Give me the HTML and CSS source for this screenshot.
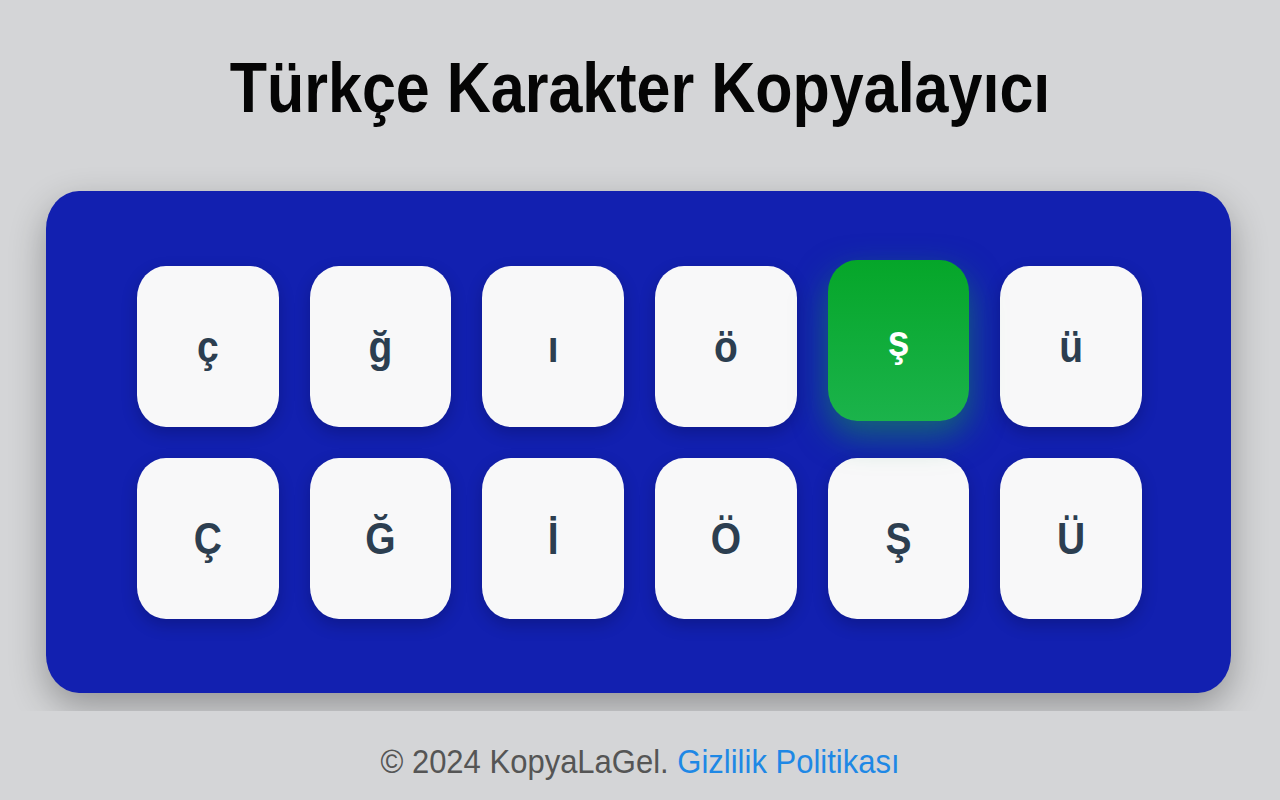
FILE: index.html
```html
<!DOCTYPE html>
<html lang="tr">
<head>
<meta charset="utf-8">
<title>Türkçe Karakter Kopyalayıcı</title>
<link rel="stylesheet" href="styles.css">
</head>
<body>
<main class="page">
  <h1 class="title"><span class="title-text">Türkçe Karakter Kopyalayıcı</span></h1>
  <section class="board">
    <div class="keys">
      <button class="key"><span class="glyph">ç</span></button>
      <button class="key"><span class="glyph">ğ</span></button>
      <button class="key"><span class="glyph">ı</span></button>
      <button class="key"><span class="glyph">ö</span></button>
      <button class="key key-active"><span class="glyph">ş</span></button>
      <button class="key"><span class="glyph">ü</span></button>
      <button class="key"><span class="glyph">Ç</span></button>
      <button class="key"><span class="glyph">Ğ</span></button>
      <button class="key"><span class="glyph">İ</span></button>
      <button class="key"><span class="glyph">Ö</span></button>
      <button class="key"><span class="glyph">Ş</span></button>
      <button class="key"><span class="glyph">Ü</span></button>
    </div>
  </section>
</main>
<footer class="footer">
  <p class="footer-text">© 2024 KopyaLaGel. <a class="footer-link" href="#">Gizlilik Politikası</a></p>
</footer>
</body>
</html>
```

FILE: styles.css
```css
html, body {
  margin: 0;
  padding: 0;
}

body {
  background: #d4d5d7;
  font-family: "Liberation Sans", Arial, sans-serif;
  height: 800px;
  overflow: hidden;
}

.page {
  display: flex;
  flex-direction: column;
}

.title {
  margin: 58px 0 72px;
  font-size: 61px;
  line-height: 61px;
  font-weight: 700;
  color: #050505;
  text-align: center;
}

.title-text {
  display: inline-block;
  transform: scaleY(1.14);
}

.board {
  margin: 0 49px 0 46px;
  padding: 75px 89px 74px 91px;
  background: #1220b0;
  border-radius: 33px / 38px;
  box-shadow: 0 14px 36px rgba(0, 0, 0, 0.3);
}

.keys {
  display: grid;
  grid-template-columns: repeat(6, 1fr);
  column-gap: 31px;
  row-gap: 31px;
}

.key {
  height: 161px;
  border: none;
  padding: 0;
  border-radius: 29px / 32px;
  background: #f8f8f9;
  color: #2c3e50;
  font-family: "Liberation Sans", Arial, sans-serif;
  font-size: 39px;
  font-weight: 700;
  display: flex;
  align-items: center;
  justify-content: center;
  box-shadow: 0 6px 16px rgba(0, 0, 20, 0.22);
  cursor: pointer;
}

.glyph {
  display: inline-block;
  transform: scaleY(1.12);
}

.key-active {
  transform: translateY(-6px);
  background: linear-gradient(180deg, #05a629 0%, #1bb34b 100%);
  color: #ffffff;
  box-shadow: 0 14px 34px rgba(24, 150, 76, 0.6);
}

.footer {
  position: relative;
  z-index: 1;
  margin-top: 18px;
  height: 89px;
  background: #d4d5d7;
  box-sizing: border-box;
  padding-top: 35px;
}

.footer-text {
  margin: 0;
  text-align: center;
  font-size: 31px;
  line-height: 31px;
  color: #555555;
  transform: scaleY(1.1);
}

.footer-link {
  color: #1e88e5;
  text-decoration: none;
}
```
